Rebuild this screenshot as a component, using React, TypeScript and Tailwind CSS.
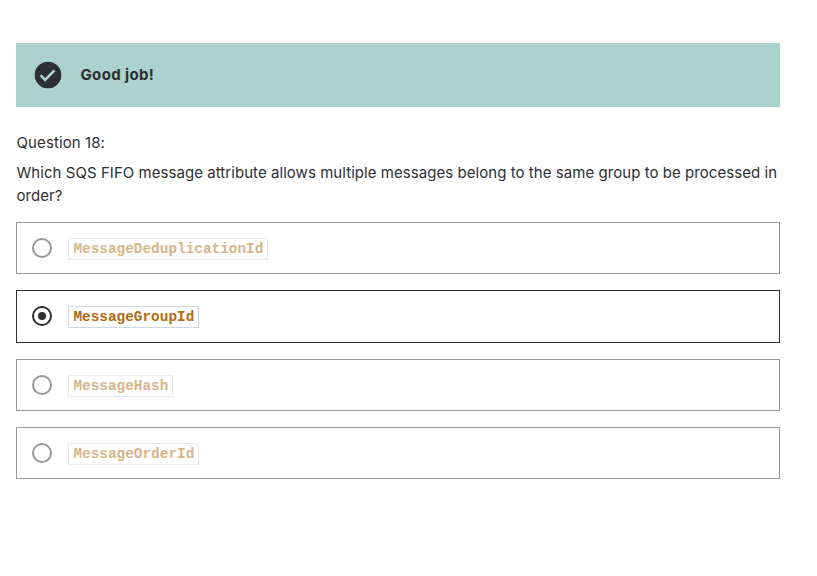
const options = [
  { label: 'MessageDeduplicationId', selected: false },
  { label: 'MessageGroupId', selected: true },
  { label: 'MessageHash', selected: false },
  { label: 'MessageOrderId', selected: false },
];

function Option({ label, selected }: { label: string; selected: boolean }) {
  return (
    <label
      className={`flex items-start border pl-[15px] pt-[15px] ${
        selected ? 'h-[53px] border-[#2d2f31]' : 'h-[52px] border-[#969798]'
      }`}
    >
      <span
        className={`flex size-5 shrink-0 items-center justify-center rounded-full border-2 ${
          selected ? 'border-[#2d2f31]' : 'border-[#969798]'
        }`}
      >
        {selected && <span className="size-2 rounded-full bg-[#2d2f31]" />}
      </span>
      <code
        className={`ml-4 h-[22px] border border-[#d1d7dc] pl-[4.4px] pr-[3.6px] font-['Liberation_Mono',monospace] text-[14.4px] font-bold leading-[20px] text-[#b4690e] ${
          selected ? '' : 'opacity-50'
        }`}
      >
        {label}
      </code>
    </label>
  );
}

export default function App() {
  return (
    <main className="h-[576px] w-[817px] bg-white pl-4 pr-[37px] pt-[43px] font-['Inter',sans-serif] text-[#2d2f31]">
      <div className="flex h-16 items-center bg-[#acd2cc] pl-4">
        <svg className="size-8" viewBox="0 0 24 24" fill="currentColor">
          <path
            fillRule="evenodd"
            d="M12 2a10 10 0 1 0 0 20 10 10 0 0 0 0-20zM9.8 17l-4-4.1 1.4-1.4 2.6 2.7 6.4-6.4 1.4 1.4z"
          />
        </svg>
        <span className="ml-[16.5px] text-[15px] font-bold leading-6 tracking-[0.36px]">Good job!</span>
      </div>
      <div className="mt-6 pl-[0.5px] text-[15px] leading-6 tracking-[0.1px]">Question 18:</div>
      <p className="mt-1.5 whitespace-nowrap pl-[0.5px] text-[15px] leading-[23px] tracking-[0.052px]">
        Which SQS FIFO message attribute allows multiple messages belong to the same group to be processed in
        <br />
        order?
      </p>
      <div className="mt-[15px] flex flex-col gap-4">
        {options.map((o) => (
          <Option key={o.label} {...o} />
        ))}
      </div>
    </main>
  );
}
